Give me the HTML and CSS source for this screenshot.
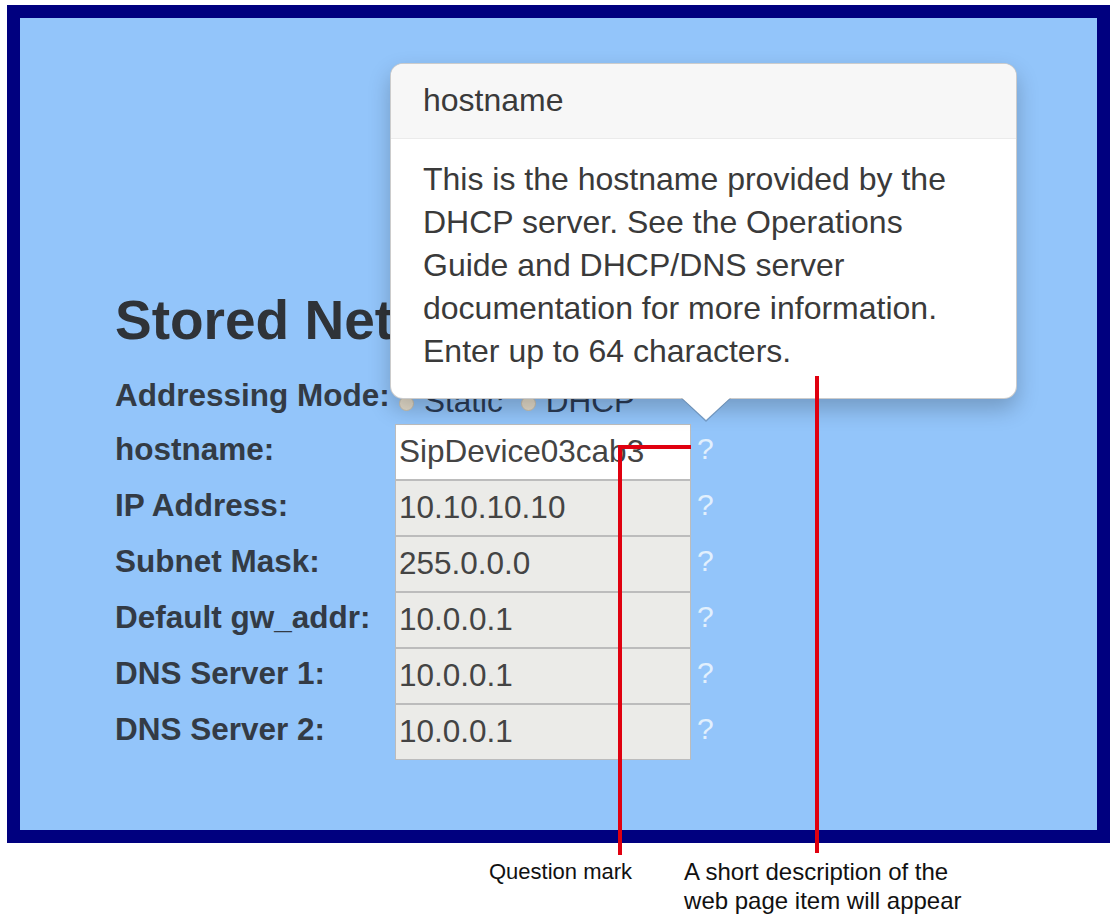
FILE: index.html
```html
<!DOCTYPE html>
<html lang="en">
<head>
  <meta charset="UTF-8">
  <meta name="viewport" content="width=device-width, initial-scale=1">
  <title>Stored Network Settings</title>
  <link rel="stylesheet" href="styles.css">
</head>
<body>
  <div class="figure">
    <div class="frame">
      <section class="panel">
        <h2>Stored Network Settings</h2>

        <div class="form-grid">
          <label class="field-label mode-label">Addressing Mode:</label>
          <div class="mode-options">
            <input type="radio" name="mode" id="mode-static"><span>Static</span>
            <input type="radio" name="mode" id="mode-dhcp" checked><span>DHCP</span>
          </div>
          <span></span>

          <label class="field-label" for="hostname">hostname:</label>
          <input class="field" id="hostname" type="text" value="SipDevice03cab3">
          <span class="help">?</span>

          <label class="field-label" for="ip">IP Address:</label>
          <input class="field" id="ip" type="text" value="10.10.10.10" readonly>
          <span class="help">?</span>

          <label class="field-label" for="mask">Subnet Mask:</label>
          <input class="field" id="mask" type="text" value="255.0.0.0" readonly>
          <span class="help">?</span>

          <label class="field-label" for="gw">Default gw_addr:</label>
          <input class="field" id="gw" type="text" value="10.0.0.1" readonly>
          <span class="help">?</span>

          <label class="field-label" for="dns1">DNS Server 1:</label>
          <input class="field" id="dns1" type="text" value="10.0.0.1" readonly>
          <span class="help">?</span>

          <label class="field-label" for="dns2">DNS Server 2:</label>
          <input class="field" id="dns2" type="text" value="10.0.0.1" readonly>
          <span class="help">?</span>
        </div>
      </section>

      <!-- popover opened from the hostname help mark -->
      <div class="popover">
        <div class="popover-title">hostname</div>
        <div class="popover-content">This is the hostname provided by the DHCP server. See the Operations Guide and DHCP/DNS server documentation for more information. Enter up to 64 characters.</div>
        <div class="arrow"></div>
      </div>
    </div>

    <!-- callout lines -->
    <div class="callout callout-qmark-h"></div>
    <div class="callout callout-qmark-v"></div>
    <div class="callout callout-desc-v"></div>

    <div class="captions">
      <p class="caption caption-qmark">Question mark</p>
      <p class="caption caption-desc">A short description of the<br>web page item will appear</p>
    </div>
  </div>
</body>
</html>
```

FILE: styles.css
```css
* { margin: 0; padding: 0; box-sizing: border-box; }

body {
  background: #fff;
  font-family: "Liberation Sans", Arial, sans-serif;
  color: #333;
}

.figure {
  position: relative;
  width: 1115px;
  height: 918px;
  padding: 5px 0 0 7px;
}

.frame {
  position: relative;
  width: 1103px;
  height: 838px;
  border: 13px solid #00007f;
  background: #93c5fa;
}

.panel {
  padding: 272px 0 0 95px;
}

.panel h2 {
  font-size: 55px;
  line-height: 1.1;
  font-weight: bold;
  color: #2f3338;
  margin-bottom: 22px;
}

.form-grid {
  display: grid;
  grid-template-columns: 280px 296px auto;
  grid-template-rows: 51px repeat(6, 56px);
  align-items: center;
}

.field-label {
  font-size: 31.5px;
  font-weight: bold;
  color: #333b45;
  margin-top: -4px;
}

.mode-label,
.mode-options {
  align-self: start;
  line-height: 44px;
}

.mode-label {
  margin-top: 0;
}

.mode-options {
  display: flex;
  align-items: center;
  padding-top: 6px;
  font-size: 31.5px;
  color: #2a3b55;
}

.mode-options input {
  appearance: none;
  width: 15px;
  height: 15px;
  border-radius: 50%;
  background: #e4dccb;
  border: 1px solid #c9c0ae;
  margin: 6px 10px 0 4px;
}

.mode-options span {
  margin-right: 14px;
}

.field {
  width: 296px;
  height: 56px;
  border: 1px solid #bcbcbc;
  background: #ebebe8;
  padding: 0 0 0 3px;
  font-family: inherit;
  font-size: 31.5px;
  color: #444;
  outline: none;
}

.field:not([readonly]) {
  background: #fff;
}

.help {
  padding-left: 6px;
  margin-top: -6px;
  font-size: 30px;
  color: #e2f0fd;
}

/* popover */
.popover {
  position: absolute;
  left: 370px;
  top: 45px;
  width: 627px;
  background: #fff;
  border: 1px solid rgba(0, 0, 0, 0.2);
  border-radius: 13px;
  box-shadow: 0 10px 22px rgba(0, 0, 0, 0.22);
  font-size: 32px;
  color: #3a3a3a;
}

.popover-title {
  padding: 16px 32px 18px;
  line-height: 40px;
  background: #f7f7f7;
  border-bottom: 1px solid #ebebeb;
  border-radius: 12px 12px 0 0;
}

.popover-content {
  padding: 19px 32px 25px;
  line-height: 43px;
}

.arrow,
.arrow::after {
  position: absolute;
  width: 0;
  height: 0;
  border-style: solid;
  border-color: transparent;
}

.arrow {
  left: 290px;
  bottom: -24px;
  border-width: 24px 25px 0;
  border-top-color: rgba(0, 0, 0, 0.18);
}

.arrow::after {
  content: "";
  left: -24px;
  bottom: 2px;
  border-width: 22px 24px 0;
  border-top-color: #fff;
}

/* callouts */
.callout {
  position: absolute;
  background: #e0000f;
}

.callout-qmark-h {
  left: 618px;
  top: 445px;
  width: 73px;
  height: 4px;
}

.callout-qmark-v {
  left: 618px;
  top: 445px;
  width: 4px;
  height: 410px;
}

.callout-desc-v {
  left: 815px;
  top: 376px;
  width: 4px;
  height: 477px;
}

.captions {
  display: flex;
  gap: 52px;
  padding: 14px 0 0 482px;
}

.caption {
  line-height: 29px;
  color: #111;
}

.caption-qmark {
  font-size: 22px;
}

.caption-desc {
  font-size: 24px;
}
```
